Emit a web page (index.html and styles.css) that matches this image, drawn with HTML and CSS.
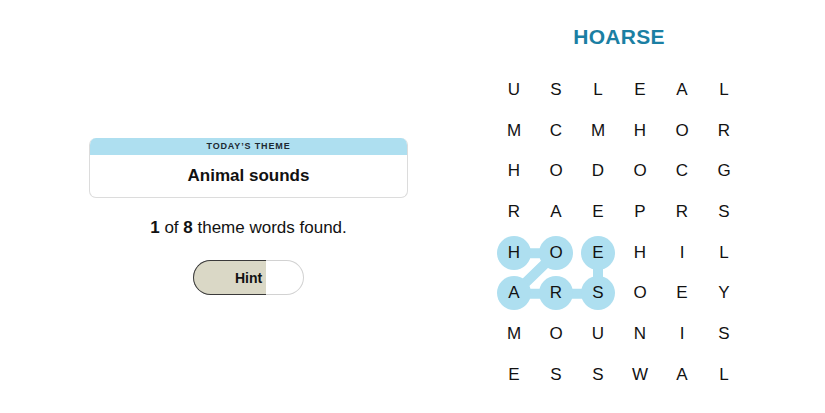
FILE: index.html
```html
<!DOCTYPE html>
<html>
<head>
<meta charset="utf-8">
<link rel="stylesheet" href="styles.css">
</head>
<body>
<div class="page">
  <div class="left">
    <div class="theme-card">
      <div class="theme-head">TODAY’S THEME</div>
      <div class="theme-body">Animal sounds</div>
    </div>
    <p class="progress"><b>1</b> of <b>8</b> theme words found.</p>
    <button class="hint">
      <span class="hint-fill" style="width:66%"></span>
      <span class="hint-label">Hint</span>
    </button>
  </div>
  <div class="right">
    <h1 class="word">HOARSE</h1>
    <div class="board">
      <svg class="links" width="252" height="326" viewBox="0 0 252 326">
        <polyline points="21,183.15 63,183.15 21,223.85 63,223.85 105,223.85 105,183.15" fill="none" stroke="#aedff0" stroke-width="10" stroke-linejoin="round" stroke-linecap="round"/>
      </svg>
      <span class="cell">U</span><span class="cell">S</span><span class="cell">L</span><span class="cell">E</span><span class="cell">A</span><span class="cell">L</span>
      <span class="cell">M</span><span class="cell">C</span><span class="cell">M</span><span class="cell">H</span><span class="cell">O</span><span class="cell">R</span>
      <span class="cell">H</span><span class="cell">O</span><span class="cell">D</span><span class="cell">O</span><span class="cell">C</span><span class="cell">G</span>
      <span class="cell">R</span><span class="cell">A</span><span class="cell">E</span><span class="cell">P</span><span class="cell">R</span><span class="cell">S</span>
      <span class="cell sel">H</span><span class="cell sel">O</span><span class="cell sel">E</span><span class="cell">H</span><span class="cell">I</span><span class="cell">L</span>
      <span class="cell sel">A</span><span class="cell sel">R</span><span class="cell sel">S</span><span class="cell">O</span><span class="cell">E</span><span class="cell">Y</span>
      <span class="cell">M</span><span class="cell">O</span><span class="cell">U</span><span class="cell">N</span><span class="cell">I</span><span class="cell">S</span>
      <span class="cell">E</span><span class="cell">S</span><span class="cell">S</span><span class="cell">W</span><span class="cell">A</span><span class="cell">L</span>
    </div>
  </div>
</div>
</body>
</html>
```

FILE: styles.css
```css
html, body {
  margin: 0;
  padding: 0;
  background: #ffffff;
}
body {
  font-family: "Liberation Sans", Arial, sans-serif;
  color: #121212;
}
.page {
  display: flex;
  width: 825px;
  height: 413px;
}
.left {
  width: 497px;
  display: flex;
  flex-direction: column;
  align-items: center;
  padding-top: 138px;
  box-sizing: border-box;
}
.theme-card {
  width: 319px;
  border: 1px solid #dcdcdc;
  border-top: none;
  border-radius: 7px;
  overflow: hidden;
  box-sizing: border-box;
}
.theme-head {
  height: 17px;
  background: #aedff0;
  font-size: 9px;
  font-weight: bold;
  letter-spacing: 0.85px;
  text-align: center;
  line-height: 17px;
  color: #1c2a33;
}
.theme-body {
  height: 42px;
  font-size: 17px;
  font-weight: bold;
  text-align: center;
  line-height: 42px;
  color: #111;
}
.progress {
  margin: 21px 0 0;
  font-size: 17px;
  line-height: 18px;
  color: #121212;
}
.hint {
  position: relative;
  margin-top: 23px;
  width: 111px;
  height: 35px;
  padding: 0;
  border: none;
  border-radius: 18px;
  background: #ffffff;
  box-shadow: inset 0 0 0 1px #d2d2d2;
  font-family: "Liberation Sans", Arial, sans-serif;
  box-sizing: border-box;
}
.hint-fill {
  position: absolute;
  left: 0;
  top: 0;
  bottom: 0;
  background: #dad8c6;
  border: 1.5px solid #3a3a3a;
  border-right: none;
  border-radius: 18px 0 0 18px;
  box-sizing: border-box;
}
.hint-label {
  position: relative;
  font-size: 14px;
  font-weight: bold;
  color: #121212;
}
.right {
  width: 244px;
  display: flex;
  flex-direction: column;
  align-items: center;
}
.word {
  margin: 23px 0 0;
  font-size: 21px;
  line-height: 28px;
  font-weight: bold;
  color: #1b7fa3;
  letter-spacing: 0.3px;
}
.board {
  position: relative;
  margin-top: 18.65px;
  display: grid;
  grid-template-columns: repeat(6, 42px);
  grid-template-rows: repeat(8, 40.7px);
  width: 252px;
}
.links {
  position: absolute;
  left: 0;
  top: 0;
  z-index: 0;
}
.cell {
  position: relative;
  z-index: 1;
  display: flex;
  align-items: center;
  justify-content: center;
  font-size: 17px;
  color: #121212;
}
.cell.sel::before {
  content: "";
  position: absolute;
  width: 34px;
  height: 34px;
  border-radius: 50%;
  background: #aedff0;
  left: 4px;
  top: 3.35px;
  z-index: -1;
}
```
